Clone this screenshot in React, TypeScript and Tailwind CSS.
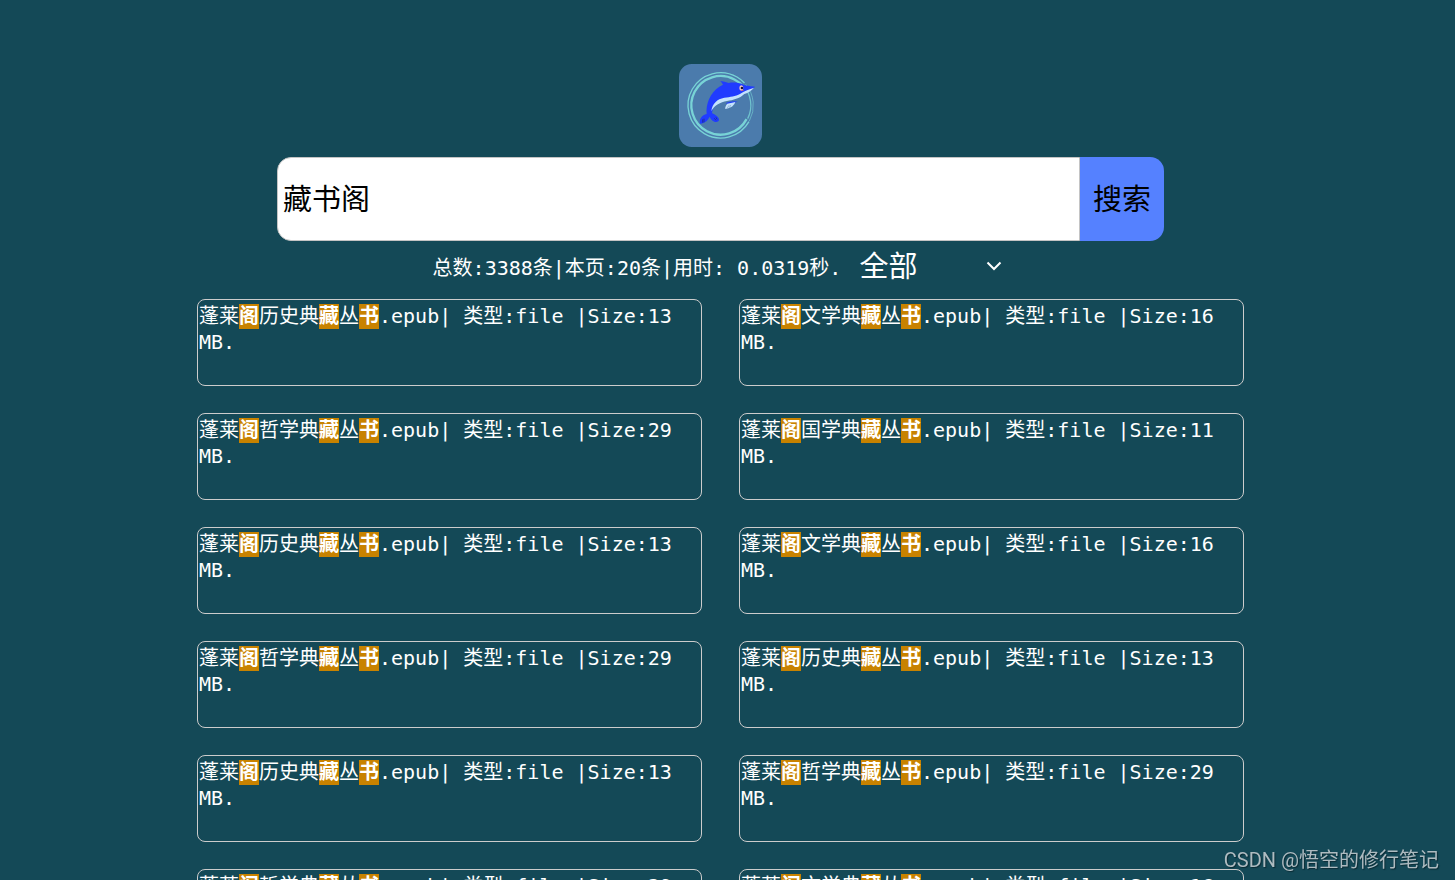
import { Fragment, useState } from 'react';
import type { FormEvent } from 'react';

interface Book {
  category: string;
  size: number;
}

const books: Book[] = [
  { category: '历史', size: 13 },
  { category: '文学', size: 16 },
  { category: '哲学', size: 29 },
  { category: '国学', size: 11 },
  { category: '历史', size: 13 },
  { category: '文学', size: 16 },
  { category: '哲学', size: 29 },
  { category: '历史', size: 13 },
  { category: '历史', size: 13 },
  { category: '哲学', size: 29 },
  { category: '哲学', size: 29 },
  { category: '文学', size: 16 },
];

function Logo() {
  return (
    <svg viewBox="0 0 249 249" className="size-[83px] shrink-0" role="img" aria-label="海豚">
      <rect width="249" height="249" rx="38" fill="#4b7bac" />
      <g fill="none" stroke="#78d3d6">
        <circle cx="125" cy="124" r="88" strokeWidth="7" strokeDasharray="446 107" transform="rotate(28 125 124)" />
        <circle cx="125" cy="124" r="98" strokeWidth="4" strokeDasharray="490 126" transform="rotate(30 125 124)" />
        <path d="M191 62A90 90 0 0 1 206 164" strokeWidth="4" opacity="0.8" />
        <path d="M200 61A98 98 0 0 1 211 171" strokeWidth="3" opacity="0.6" />
      </g>
      <path
        d="M83 150C80 121 93 86 121 68L132 62Q129 56 124 51Q137 52 149 57C163 54 178 56 192 61Q202 67 228 68C222 75 211 82 199 87C181 103 160 103 143 106C119 111 102 125 99 147C108 152 118 157 120 166C121 174 112 176 106 173C98 170 94 163 92 158C87 169 78 178 63 179C60 165 69 153 83 150Z"
        fill="#203cff"
      />
      <path
        d="M97 141C100 119 114 105 136 101C155 98 168 98 184 89C198 80 210 76 225 71C218 79 208 86 196 90C182 104 162 108 144 111C123 115 108 123 97 141Z"
        fill="#c4e3fc"
      />
      <path d="M141 117Q157 110 176 113Q162 119 144 120Z" fill="#203cff" />
      <path d="M145 119L169 114Q165 130 139 135Q137 129 145 119Z" fill="#c4e3fc" />
      <path d="M151 131L155 123M145 132L150 124" stroke="#5e8ab7" strokeWidth="1.5" />
      <ellipse cx="187" cy="72" rx="6" ry="8" fill="#f6c7c0" />
      <circle cx="189" cy="72" r="4" fill="#171736" />
      <path d="M186 80L194 79" stroke="#ee6661" strokeWidth="2" />
      <path d="M71 166v10M75 164v11M106 163l5 6M111 160l3 6" stroke="#1b2678" strokeWidth="2" />
    </svg>
  );
}

function Mark({ children }: { children: string }) {
  return <mark className="bg-[#c88200] pb-px font-bold text-white">{children}</mark>;
}

function BookCard({ book }: { book: Book }) {
  return (
    <li className="h-[87px] rounded-lg border border-[#cccccc] px-px py-[3px] leading-[26px]">
      蓬莱<Mark>阁</Mark>
      {book.category}典<Mark>藏</Mark>丛<Mark>书</Mark>
      {`.epub| 类型:file |Size:${book.size} `}
      <span>MB.</span>
    </li>
  );
}

export default function App() {
  const [keyword, setKeyword] = useState('藏书阁');
  const [type, setType] = useState('all');

  const onSubmit = (e: FormEvent) => e.preventDefault();

  return (
    <Fragment>
      <main className="flex h-screen flex-col items-center overflow-y-auto bg-[#144957] pt-16 pr-[14px] font-['DejaVu_Sans_Mono','Noto_Sans_CJK_SC',monospace] text-[20px] text-white [scrollbar-width:none]">
        <Logo />
        <form
          onSubmit={onSubmit}
          className="mt-2.5 flex h-[84px] w-full max-w-[887px] shrink-0 font-['Noto_Sans_CJK_SC',sans-serif] text-[29px] text-black"
        >
          <input
            type="text"
            aria-label="关键词"
            value={keyword}
            onChange={(e) => setKeyword(e.target.value)}
            className="min-w-0 flex-1 rounded-l-[14px] border border-[#c4c4c4] bg-white px-[5px] pb-0.5 outline-none"
          />
          <button type="submit" className="w-[84px] rounded-r-[14px] bg-[#5581ff] pb-0.5">
            搜索
          </button>
        </form>

        <div className="flex h-[58px] shrink-0 items-center justify-center gap-[15px]">
          <p className="pb-1">总数:3388条|本页:20条|用时: 0.0319秒.</p>
          <div className="relative pb-3">
            <select
              aria-label="类型"
              value={type}
              onChange={(e) => setType(e.target.value)}
              className="w-[152px] appearance-none bg-transparent pl-[3px] font-['Noto_Sans_CJK_SC',sans-serif] text-[29px] leading-[42px] outline-none"
            >
              <option value="all">全部</option>
              <option value="file">文件</option>
            </select>
            <svg
              viewBox="0 0 16 10"
              className="pointer-events-none absolute top-[18px] right-1.5 h-2.5 w-4"
              fill="none"
              stroke="white"
              strokeWidth="2"
            >
              <path d="M1.5 1.5L8 8L14.5 1.5" />
            </svg>
          </div>
        </div>

        <ul className="grid w-full max-w-[1047px] grid-cols-2 gap-x-[37px] gap-y-[27px]">
          {books.map((book, i) => (
            <BookCard key={i} book={book} />
          ))}
        </ul>
      </main>
      <div className="fixed right-4 bottom-[5px] font-['Roboto','Noto_Sans_CJK_SC',sans-serif] text-[20px] leading-[30px] text-[#aebbc0] [text-shadow:1px_1px_1px_#0b2c35]">
        CSDN @悟空的修行笔记
      </div>
    </Fragment>
  );
}
